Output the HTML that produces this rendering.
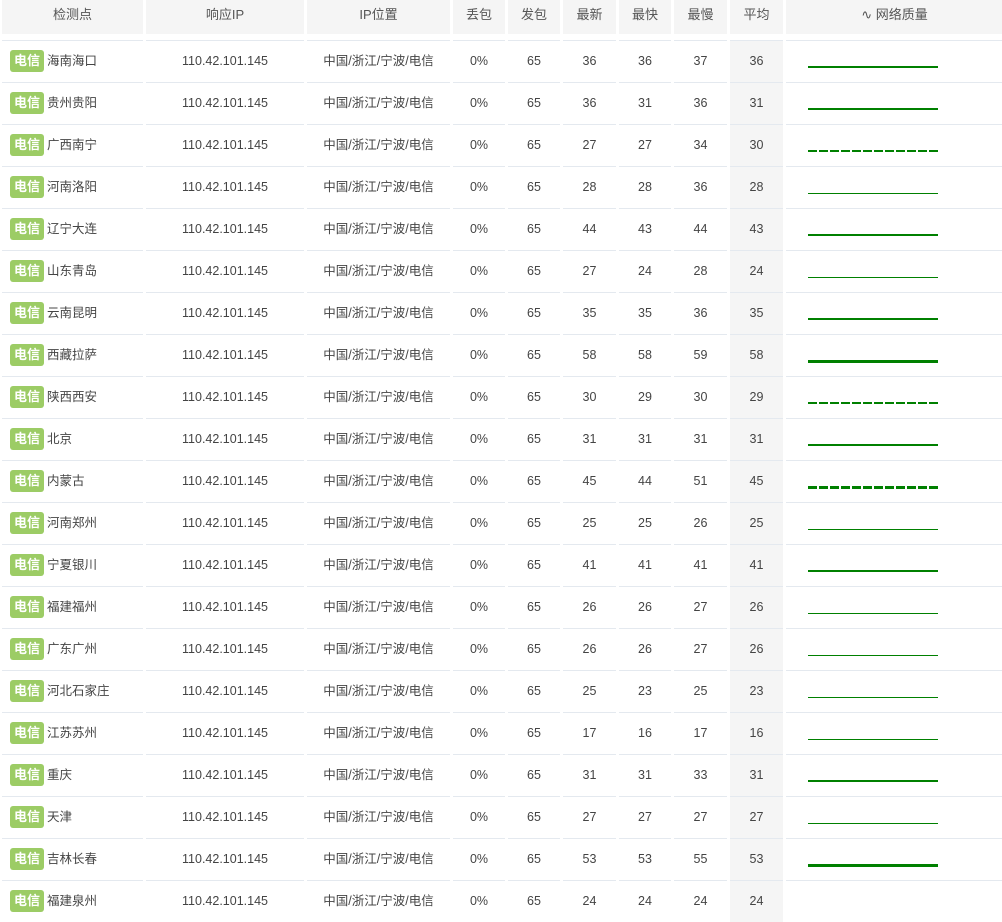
<!DOCTYPE html>
<html><head><meta charset="utf-8"><style>
body{margin:0;width:1002px;height:900px;overflow:hidden;background:#fff;font-family:"Liberation Sans","Noto Sans CJK SC",sans-serif;font-size:12.5px;color:#444}
.r{position:absolute;left:2px;display:flex;height:42px}
.r>div{box-sizing:border-box;height:42px;border-top:1px solid #e4e9ef;margin-right:3px;text-align:center;line-height:40px;position:relative}
.h{top:0}
.h>div{background:#f5f5f5;border-top:none!important;height:34px!important;line-height:30px!important;color:#555;font-size:13px}
.c1{width:141px;text-align:left!important}.c2{width:158px}.c3{width:143px}.c4{width:52px}.c5{width:52px}.c6{width:53px}.c7{width:52px}.c8{width:53px}.c9{width:53px;background:#f5f5f5}.c10{width:217px;margin-right:0!important}
.b{display:inline-block;margin-left:8px;width:34px;height:22px;line-height:22px;background:#9ccc65;color:#fff;border-radius:3px;font-weight:bold;text-align:center;font-size:13px;vertical-align:middle;margin-top:-2px}
.n{margin-left:3px}
.l{position:absolute;left:22px;top:25px;width:130px;background:#008000}
.t1{height:1px;top:26px}.t2{height:2px}.t3{height:3px}
.d{height:2px;background:repeating-linear-gradient(90deg,#008000 0 9px,transparent 9px 11px)}
</style></head><body>
<div class="r h"><div class="c1" style="text-align:center!important">检测点</div><div class="c2">响应IP</div><div class="c3">IP位置</div><div class="c4">丢包</div><div class="c5">发包</div><div class="c6">最新</div><div class="c7">最快</div><div class="c8">最慢</div><div class="c9">平均</div><div class="c10">∿ 网络质量</div></div>

<div class="r" style="top:40px"><div class="c1"><span class="b">电信</span><span class="n">海南海口</span></div><div class="c2">110.42.101.145</div><div class="c3">中国/浙江/宁波/电信</div><div class="c4">0%</div><div class="c5">65</div><div class="c6">36</div><div class="c7">36</div><div class="c8">37</div><div class="c9">36</div><div class="c10"><div class="l t2"></div></div></div>
<div class="r" style="top:82px"><div class="c1"><span class="b">电信</span><span class="n">贵州贵阳</span></div><div class="c2">110.42.101.145</div><div class="c3">中国/浙江/宁波/电信</div><div class="c4">0%</div><div class="c5">65</div><div class="c6">36</div><div class="c7">31</div><div class="c8">36</div><div class="c9">31</div><div class="c10"><div class="l t2"></div></div></div>
<div class="r" style="top:124px"><div class="c1"><span class="b">电信</span><span class="n">广西南宁</span></div><div class="c2">110.42.101.145</div><div class="c3">中国/浙江/宁波/电信</div><div class="c4">0%</div><div class="c5">65</div><div class="c6">27</div><div class="c7">27</div><div class="c8">34</div><div class="c9">30</div><div class="c10"><div class="l d"></div></div></div>
<div class="r" style="top:166px"><div class="c1"><span class="b">电信</span><span class="n">河南洛阳</span></div><div class="c2">110.42.101.145</div><div class="c3">中国/浙江/宁波/电信</div><div class="c4">0%</div><div class="c5">65</div><div class="c6">28</div><div class="c7">28</div><div class="c8">36</div><div class="c9">28</div><div class="c10"><div class="l t1"></div></div></div>
<div class="r" style="top:208px"><div class="c1"><span class="b">电信</span><span class="n">辽宁大连</span></div><div class="c2">110.42.101.145</div><div class="c3">中国/浙江/宁波/电信</div><div class="c4">0%</div><div class="c5">65</div><div class="c6">44</div><div class="c7">43</div><div class="c8">44</div><div class="c9">43</div><div class="c10"><div class="l t2"></div></div></div>
<div class="r" style="top:250px"><div class="c1"><span class="b">电信</span><span class="n">山东青岛</span></div><div class="c2">110.42.101.145</div><div class="c3">中国/浙江/宁波/电信</div><div class="c4">0%</div><div class="c5">65</div><div class="c6">27</div><div class="c7">24</div><div class="c8">28</div><div class="c9">24</div><div class="c10"><div class="l t1"></div></div></div>
<div class="r" style="top:292px"><div class="c1"><span class="b">电信</span><span class="n">云南昆明</span></div><div class="c2">110.42.101.145</div><div class="c3">中国/浙江/宁波/电信</div><div class="c4">0%</div><div class="c5">65</div><div class="c6">35</div><div class="c7">35</div><div class="c8">36</div><div class="c9">35</div><div class="c10"><div class="l t2"></div></div></div>
<div class="r" style="top:334px"><div class="c1"><span class="b">电信</span><span class="n">西藏拉萨</span></div><div class="c2">110.42.101.145</div><div class="c3">中国/浙江/宁波/电信</div><div class="c4">0%</div><div class="c5">65</div><div class="c6">58</div><div class="c7">58</div><div class="c8">59</div><div class="c9">58</div><div class="c10"><div class="l t3"></div></div></div>
<div class="r" style="top:376px"><div class="c1"><span class="b">电信</span><span class="n">陕西西安</span></div><div class="c2">110.42.101.145</div><div class="c3">中国/浙江/宁波/电信</div><div class="c4">0%</div><div class="c5">65</div><div class="c6">30</div><div class="c7">29</div><div class="c8">30</div><div class="c9">29</div><div class="c10"><div class="l d"></div></div></div>
<div class="r" style="top:418px"><div class="c1"><span class="b">电信</span><span class="n">北京</span></div><div class="c2">110.42.101.145</div><div class="c3">中国/浙江/宁波/电信</div><div class="c4">0%</div><div class="c5">65</div><div class="c6">31</div><div class="c7">31</div><div class="c8">31</div><div class="c9">31</div><div class="c10"><div class="l t2"></div></div></div>
<div class="r" style="top:460px"><div class="c1"><span class="b">电信</span><span class="n">内蒙古</span></div><div class="c2">110.42.101.145</div><div class="c3">中国/浙江/宁波/电信</div><div class="c4">0%</div><div class="c5">65</div><div class="c6">45</div><div class="c7">44</div><div class="c8">51</div><div class="c9">45</div><div class="c10"><div class="l d" style="height:3px"></div></div></div>
<div class="r" style="top:502px"><div class="c1"><span class="b">电信</span><span class="n">河南郑州</span></div><div class="c2">110.42.101.145</div><div class="c3">中国/浙江/宁波/电信</div><div class="c4">0%</div><div class="c5">65</div><div class="c6">25</div><div class="c7">25</div><div class="c8">26</div><div class="c9">25</div><div class="c10"><div class="l t1"></div></div></div>
<div class="r" style="top:544px"><div class="c1"><span class="b">电信</span><span class="n">宁夏银川</span></div><div class="c2">110.42.101.145</div><div class="c3">中国/浙江/宁波/电信</div><div class="c4">0%</div><div class="c5">65</div><div class="c6">41</div><div class="c7">41</div><div class="c8">41</div><div class="c9">41</div><div class="c10"><div class="l t2"></div></div></div>
<div class="r" style="top:586px"><div class="c1"><span class="b">电信</span><span class="n">福建福州</span></div><div class="c2">110.42.101.145</div><div class="c3">中国/浙江/宁波/电信</div><div class="c4">0%</div><div class="c5">65</div><div class="c6">26</div><div class="c7">26</div><div class="c8">27</div><div class="c9">26</div><div class="c10"><div class="l t1"></div></div></div>
<div class="r" style="top:628px"><div class="c1"><span class="b">电信</span><span class="n">广东广州</span></div><div class="c2">110.42.101.145</div><div class="c3">中国/浙江/宁波/电信</div><div class="c4">0%</div><div class="c5">65</div><div class="c6">26</div><div class="c7">26</div><div class="c8">27</div><div class="c9">26</div><div class="c10"><div class="l t1"></div></div></div>
<div class="r" style="top:670px"><div class="c1"><span class="b">电信</span><span class="n">河北石家庄</span></div><div class="c2">110.42.101.145</div><div class="c3">中国/浙江/宁波/电信</div><div class="c4">0%</div><div class="c5">65</div><div class="c6">25</div><div class="c7">23</div><div class="c8">25</div><div class="c9">23</div><div class="c10"><div class="l t1"></div></div></div>
<div class="r" style="top:712px"><div class="c1"><span class="b">电信</span><span class="n">江苏苏州</span></div><div class="c2">110.42.101.145</div><div class="c3">中国/浙江/宁波/电信</div><div class="c4">0%</div><div class="c5">65</div><div class="c6">17</div><div class="c7">16</div><div class="c8">17</div><div class="c9">16</div><div class="c10"><div class="l t1"></div></div></div>
<div class="r" style="top:754px"><div class="c1"><span class="b">电信</span><span class="n">重庆</span></div><div class="c2">110.42.101.145</div><div class="c3">中国/浙江/宁波/电信</div><div class="c4">0%</div><div class="c5">65</div><div class="c6">31</div><div class="c7">31</div><div class="c8">33</div><div class="c9">31</div><div class="c10"><div class="l t2"></div></div></div>
<div class="r" style="top:796px"><div class="c1"><span class="b">电信</span><span class="n">天津</span></div><div class="c2">110.42.101.145</div><div class="c3">中国/浙江/宁波/电信</div><div class="c4">0%</div><div class="c5">65</div><div class="c6">27</div><div class="c7">27</div><div class="c8">27</div><div class="c9">27</div><div class="c10"><div class="l t1"></div></div></div>
<div class="r" style="top:838px"><div class="c1"><span class="b">电信</span><span class="n">吉林长春</span></div><div class="c2">110.42.101.145</div><div class="c3">中国/浙江/宁波/电信</div><div class="c4">0%</div><div class="c5">65</div><div class="c6">53</div><div class="c7">53</div><div class="c8">55</div><div class="c9">53</div><div class="c10"><div class="l t3"></div></div></div>
<div class="r" style="top:880px"><div class="c1"><span class="b">电信</span><span class="n">福建泉州</span></div><div class="c2">110.42.101.145</div><div class="c3">中国/浙江/宁波/电信</div><div class="c4">0%</div><div class="c5">65</div><div class="c6">24</div><div class="c7">24</div><div class="c8">24</div><div class="c9">24</div><div class="c10"></div></div>
</body></html>
